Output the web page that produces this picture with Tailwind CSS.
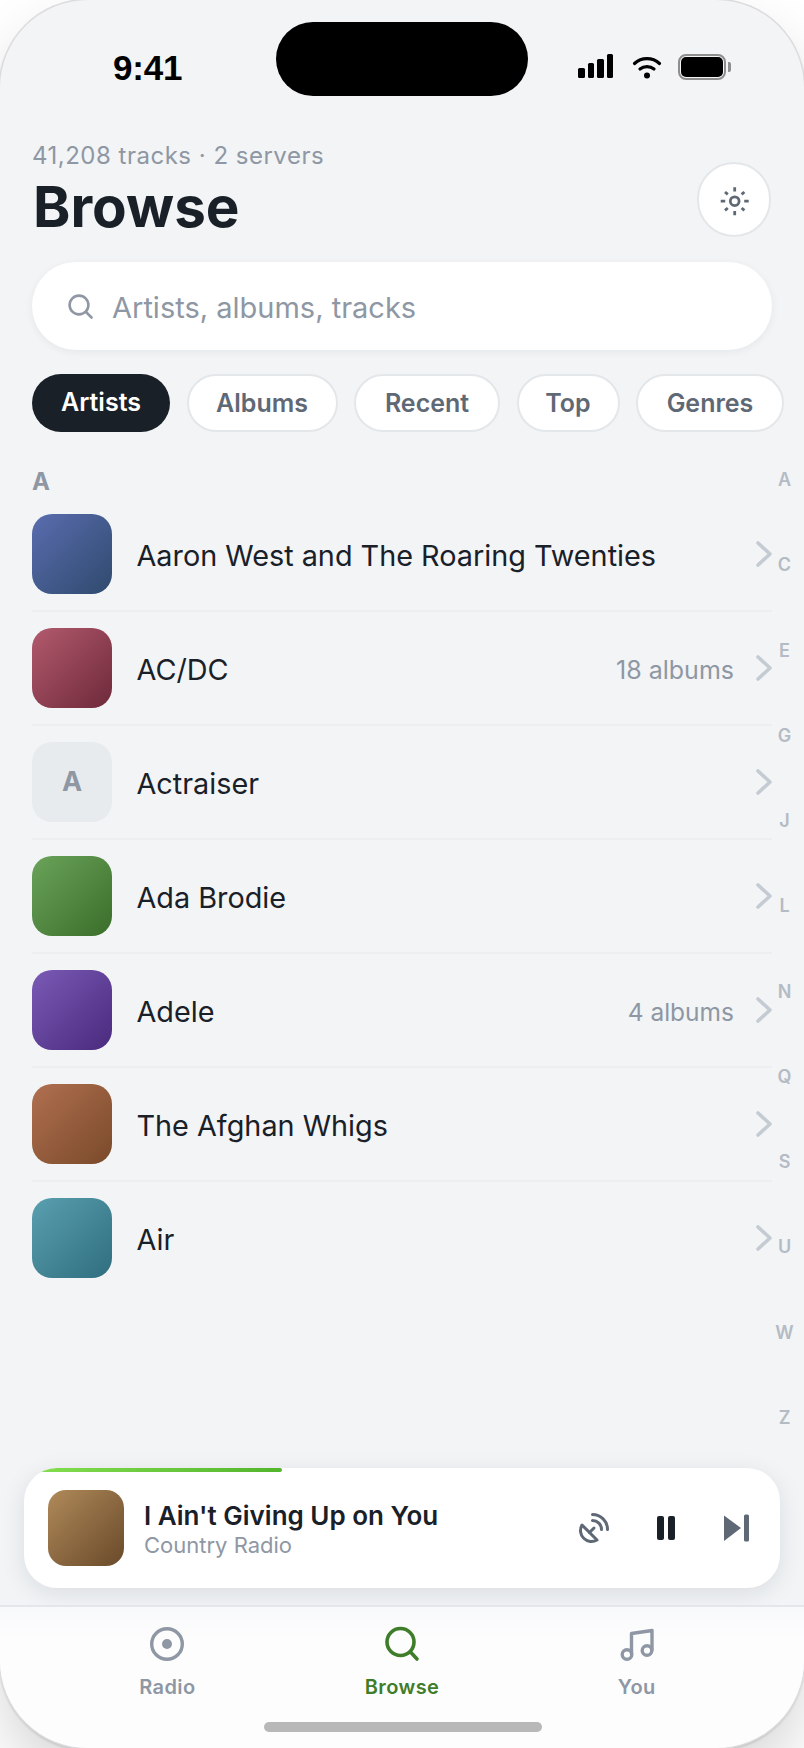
<!DOCTYPE html>
<html lang="en">
<head>
    <meta charset="UTF-8">
    <meta name="viewport" content="width=device-width, initial-scale=1.0">
    <title>Browse</title>
    <script src="https://cdn.jsdelivr.net/npm/@tailwindcss/browser@4"></script>
</head>
<body class="bg-white font-['Inter',sans-serif] overflow-hidden">
    <div class="relative w-[804px] h-[1748px] rounded-[88px] overflow-hidden bg-[#f2f4f6] flex flex-col shadow-[0_0_0_1.5px_#dcdcde,0_2px_3px_rgba(0,0,0,0.22),0_30px_60px_rgba(0,0,0,0.16)]">

        <!-- Status bar -->
        <div class="relative h-[139px] shrink-0">
            <div class="absolute left-[276px] top-[22px] w-[252px] h-[74px] rounded-[37px] bg-black"></div>
            <div class="absolute left-[113px] top-[47px] font-['Liberation_Sans',sans-serif] font-bold text-[35px] leading-[42px] tracking-[-0.2px] text-black">9:41</div>
            <div class="absolute left-[578px] top-[54px] flex items-end gap-[3px] h-[24px]">
                <div class="w-[6.5px] h-[10px] rounded-[1.5px] bg-black"></div>
                <div class="w-[6.5px] h-[15px] rounded-[1.5px] bg-black"></div>
                <div class="w-[6.5px] h-[19px] rounded-[1.5px] bg-black"></div>
                <div class="w-[6.5px] h-[24px] rounded-[1.5px] bg-black"></div>
            </div>
            <svg class="absolute left-[632px] top-[56px]" width="30" height="23" viewBox="0 0 30 23" fill="none" stroke="black" stroke-width="3.2" stroke-linecap="round">
                <path d="M2.5 7.5C9.5 1 20.5 1 27.5 7.5"/>
                <path d="M8 13C12 9.7 18 9.7 22 13"/>
                <circle cx="15" cy="19.5" r="3" fill="black" stroke="none"/>
            </svg>
            <div class="absolute left-[678px] top-[54px] w-[48px] h-[26px] rounded-[8px] border-2 border-[#8e8e8e] p-[1px]">
                <div class="w-full h-full rounded-[5px] bg-black"></div>
            </div>
            <div class="absolute left-[728px] top-[62px] w-[3px] h-[10px] rounded-r-[2px] bg-[#8e8e8e]"></div>
        </div>

        <!-- Header -->
        <div class="flex justify-between items-end pl-[32px] pr-[33px] shrink-0">
            <div>
                <div class="text-[24px] leading-[34px] tracking-[0.5px] text-[#8e97a3]">41,208 tracks · 2 servers</div>
                <h1 class="mt-[1px] ml-[1px] text-[56.6px] leading-[65px] font-bold text-[#1a2028]">Browse</h1>
            </div>
            <button class="mb-[2px] w-[74px] h-[75px] rounded-full bg-white border-2 border-[#e4e7ea] flex items-center justify-center">
                <svg width="32" height="32" viewBox="0 0 32 32" fill="none" stroke="#5f6975">
                    <circle cx="16.7" cy="17.2" r="4.4" stroke-width="2.8"/>
                    <path stroke-width="2.8" d="M16.7 3.2V7.4M16.7 27V31.2M2.7 17.2H7.2M26.2 17.2H30.7M7 8L9.8 10.4M23.6 24L26.4 26.4M7 26.4L9.8 24M23.6 10.4L26.4 8"/>
                </svg>
            </button>
        </div>

        <!-- Search -->
        <div class="mx-[32px] mt-[23px] h-[88px] shrink-0 rounded-[44px] bg-white shadow-[0_2px_8px_rgba(20,30,40,0.06)] flex items-center pl-[36px] gap-[19px]">
            <svg width="25" height="25" viewBox="0 0 25 25" fill="none" stroke="#8e97a3" stroke-width="2.6" stroke-linecap="round" class="shrink-0">
                <circle cx="11" cy="11" r="9.4"/>
                <path d="M18 18L23.5 23.5"/>
            </svg>
            <div class="pt-[4px] text-[29px] text-[#8e97a3]">Artists, albums, tracks</div>
        </div>

        <!-- Filter chips -->
        <div class="flex gap-[16.5px] pl-[32px] mt-[24px] shrink-0 whitespace-nowrap">
            <div class="h-[58px] w-[138px] pb-[1px] rounded-[29px] bg-[#1a2028] text-white text-[25px] font-semibold flex items-center justify-center">Artists</div>
            <div class="h-[58px] w-[151px] pt-[2px] rounded-[29px] bg-white border-2 border-[#e4e7ea] text-[#5f6975] text-[25px] font-semibold flex items-center justify-center">Albums</div>
            <div class="h-[58px] w-[146px] pt-[2px] rounded-[29px] bg-white border-2 border-[#e4e7ea] text-[#5f6975] text-[25px] font-semibold flex items-center justify-center">Recent</div>
            <div class="h-[58px] w-[103px] pt-[2px] rounded-[29px] bg-white border-2 border-[#e4e7ea] text-[#5f6975] text-[25px] font-semibold flex items-center justify-center">Top</div>
            <div class="h-[58px] w-[148px] pt-[2px] rounded-[29px] bg-white border-2 border-[#e4e7ea] text-[#5f6975] text-[25px] font-semibold flex items-center justify-center">Genres</div>
        </div>

        <!-- Artist list -->
        <div class="mt-[35px] flex-1 mx-[32px]">
            <div class="h-[31px] text-[24px] leading-[29px] font-bold text-[#8e97a3]">A</div>

            <div class="h-[114px] py-[16px] border-b-2 border-[#eceef0] flex items-center">
                <div class="w-[80px] h-[80px] rounded-[20px] bg-linear-to-br from-[#5a6db0] to-[#2f4a6e] shrink-0"></div>
                <div class="ml-[24.5px] pt-[4px] flex-1 text-[28.8px] text-[#1a2028]">Aaron West and The Roaring Twenties</div>
                <svg width="16" height="26" viewBox="0 0 16 26" fill="none" stroke="#c5cbd2" stroke-width="3.6" stroke-linecap="round" stroke-linejoin="round" class="shrink-0"><path d="M2 2L14 13L2 24"/></svg>
            </div>
            <div class="h-[114px] py-[16px] border-b-2 border-[#eceef0] flex items-center">
                <div class="w-[80px] h-[80px] rounded-[20px] bg-linear-to-br from-[#b35a6e] to-[#6e2a3a] shrink-0"></div>
                <div class="ml-[24.5px] pt-[4px] flex-1 text-[28.8px] text-[#1a2028]">AC/DC</div>
                <div class="mr-[22px] pt-[5px] text-[25px] text-[#8e97a3]">18 albums</div>
                <svg width="16" height="26" viewBox="0 0 16 26" fill="none" stroke="#c5cbd2" stroke-width="3.6" stroke-linecap="round" stroke-linejoin="round" class="shrink-0"><path d="M2 2L14 13L2 24"/></svg>
            </div>
            <div class="h-[114px] py-[16px] border-b-2 border-[#eceef0] flex items-center">
                <div class="w-[80px] h-[80px] rounded-[20px] bg-[#e8ebee] shrink-0 flex items-center justify-center text-[27px] font-bold text-[#8e97a3]">A</div>
                <div class="ml-[24.5px] pt-[4px] flex-1 text-[28.8px] text-[#1a2028]">Actraiser</div>
                <svg width="16" height="26" viewBox="0 0 16 26" fill="none" stroke="#c5cbd2" stroke-width="3.6" stroke-linecap="round" stroke-linejoin="round" class="shrink-0"><path d="M2 2L14 13L2 24"/></svg>
            </div>
            <div class="h-[114px] py-[16px] border-b-2 border-[#eceef0] flex items-center">
                <div class="w-[80px] h-[80px] rounded-[20px] bg-linear-to-br from-[#6ba35a] to-[#3a6e2a] shrink-0"></div>
                <div class="ml-[24.5px] pt-[4px] flex-1 text-[28.8px] text-[#1a2028]">Ada Brodie</div>
                <svg width="16" height="26" viewBox="0 0 16 26" fill="none" stroke="#c5cbd2" stroke-width="3.6" stroke-linecap="round" stroke-linejoin="round" class="shrink-0"><path d="M2 2L14 13L2 24"/></svg>
            </div>
            <div class="h-[114px] py-[16px] border-b-2 border-[#eceef0] flex items-center">
                <div class="w-[80px] h-[80px] rounded-[20px] bg-linear-to-br from-[#7a5ab5] to-[#4a2a7e] shrink-0"></div>
                <div class="ml-[24.5px] pt-[4px] flex-1 text-[28.8px] text-[#1a2028]">Adele</div>
                <div class="mr-[22px] pt-[5px] text-[24.5px] text-[#8e97a3]">4 albums</div>
                <svg width="16" height="26" viewBox="0 0 16 26" fill="none" stroke="#c5cbd2" stroke-width="3.6" stroke-linecap="round" stroke-linejoin="round" class="shrink-0"><path d="M2 2L14 13L2 24"/></svg>
            </div>
            <div class="h-[114px] py-[16px] border-b-2 border-[#eceef0] flex items-center">
                <div class="w-[80px] h-[80px] rounded-[20px] bg-linear-to-br from-[#b07050] to-[#7a4a2a] shrink-0"></div>
                <div class="ml-[24.5px] pt-[4px] flex-1 text-[28.8px] text-[#1a2028]">The Afghan Whigs</div>
                <svg width="16" height="26" viewBox="0 0 16 26" fill="none" stroke="#c5cbd2" stroke-width="3.6" stroke-linecap="round" stroke-linejoin="round" class="shrink-0"><path d="M2 2L14 13L2 24"/></svg>
            </div>
            <div class="h-[114px] py-[16px] border-b-2 border-transparent flex items-center">
                <div class="w-[80px] h-[80px] rounded-[20px] bg-linear-to-br from-[#5aa0b0] to-[#2f6e7e] shrink-0"></div>
                <div class="ml-[24.5px] pt-[4px] flex-1 text-[28.8px] text-[#1a2028]">Air</div>
                <svg width="16" height="26" viewBox="0 0 16 26" fill="none" stroke="#c5cbd2" stroke-width="3.6" stroke-linecap="round" stroke-linejoin="round" class="shrink-0"><path d="M2 2L14 13L2 24"/></svg>
            </div>
        </div>

        <!-- Alphabet index -->
        <div class="absolute right-[9.5px] top-[469px] h-[960px] w-[20px] flex flex-col justify-between items-center text-[18px] leading-[22px] font-semibold text-[#b4bbc4]">
            <span>A</span><span>C</span><span>E</span><span>G</span><span>J</span><span>L</span><span>N</span><span>Q</span><span>S</span><span>U</span><span>W</span><span>Z</span>
        </div>

        <!-- Now playing -->
        <div class="relative mx-[24px] mb-[17px] h-[120px] shrink-0 rounded-[33px] overflow-hidden bg-white flex items-center pl-[24px] pr-[30px] shadow-[0_6px_24px_rgba(20,30,40,0.1)]">
            <div class="absolute left-0 top-0 h-[4px] w-[258px] rounded-r-[2px] bg-linear-to-r from-[#86e050] to-[#52b52c]"></div>
            <div class="w-[76px] h-[76px] rounded-[18px] bg-linear-to-br from-[#b08a5a] to-[#6a4a2a] shrink-0"></div>
            <div class="ml-[20px] pt-[4px] flex-1">
                <div class="text-[26px] leading-[30px] font-semibold text-[#1a2028]">I Ain't Giving Up on You</div>
                <div class="text-[22px] leading-[28px] text-[#8e97a3]">Country Radio</div>
            </div>
            <svg width="36" height="36" viewBox="0 0 24 24" fill="none" stroke="#5f6975" stroke-width="2" stroke-linecap="round" stroke-linejoin="round" class="shrink-0">
                <path d="M4 10a7.31 7.31 0 0 0 10 10Z"/>
                <path d="m9 15 3-3"/>
                <path d="M17 13a6 6 0 0 0-6-6"/>
                <path d="M21 13A10 10 0 0 0 11 3"/>
            </svg>
            <div class="ml-[45px] flex gap-[4px] shrink-0">
                <div class="w-[7px] h-[24px] rounded-[2px] bg-[#1a2028]"></div>
                <div class="w-[7px] h-[24px] rounded-[2px] bg-[#1a2028]"></div>
            </div>
            <svg width="27" height="28" viewBox="0 0 27 28" fill="#5f6975" class="ml-[48px] shrink-0">
                <path d="M1 1.5L18 14L1 27Z"/>
                <rect x="21" y="0.5" width="5" height="27" rx="1.5"/>
            </svg>
        </div>

        <!-- Tab bar -->
        <div class="relative h-[143px] shrink-0 bg-linear-to-b from-[#f8f9fa] to-[#fdfdfe] to-[25%] border-t-2 border-[#e4e7ea] grid grid-cols-3 px-[50px] pt-[19px]">
            <div class="flex flex-col items-center gap-[13px] text-[#8e97a3]">
                <svg width="36" height="36" viewBox="0 0 36 36" fill="none" stroke="currentColor" stroke-width="3.4">
                    <circle cx="18" cy="18" r="15.3"/>
                    <circle cx="18" cy="18" r="5" fill="currentColor" stroke="none"/>
                </svg>
                <div class="text-[20px] leading-[24px] font-semibold tracking-[0.4px]">Radio</div>
            </div>
            <div class="flex flex-col items-center gap-[13px] text-[#3f7d2a]">
                <svg width="36" height="36" viewBox="0 0 36 36" fill="none" stroke="currentColor" stroke-width="3.6" stroke-linecap="round">
                    <circle cx="16.5" cy="16" r="13.5"/>
                    <path d="M26.5 26L33 33"/>
                </svg>
                <div class="text-[20px] leading-[24px] font-semibold tracking-[0.4px]">Browse</div>
            </div>
            <div class="flex flex-col items-center gap-[13px] text-[#8e97a3]">
                <svg width="36" height="36" viewBox="0 0 36 36" fill="none" stroke="currentColor" stroke-width="3.4" stroke-linecap="round" stroke-linejoin="round">
                    <path d="M12.5 28V7.5L33 4.5V24"/>
                    <circle cx="8" cy="28.5" r="4.8"/>
                    <circle cx="28" cy="24.5" r="4.8"/>
                </svg>
                <div class="text-[20px] leading-[24px] font-semibold tracking-[0.4px]">You</div>
            </div>
            <div class="absolute left-[264px] top-[115px] w-[278px] h-[10px] rounded-full bg-[#b8b8b8]"></div>
        </div>
    </div>
</body>
</html>
